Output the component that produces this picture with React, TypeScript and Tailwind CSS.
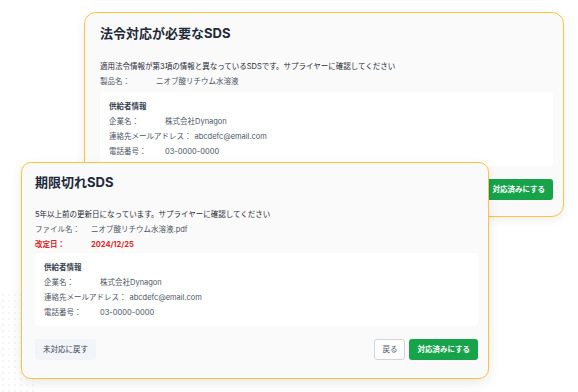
import React from 'react';

type Row = { label: string; value: string; wide?: boolean };

const supplierRows: Row[] = [
  { label: '企業名：', value: '株式会社Dynagon' },
  { label: '連絡先メールアドレス：', value: 'abcdefc@email.com', wide: true },
  { label: '電話番号：', value: '03-0000-0000' },
];

const InfoRow: React.FC<{ row: Row; className?: string }> = ({ row, className }) => (
  <div className={`flex h-[15px] items-center ${className ?? 'text-[#4b5563]'}`}>
    <span className={row.wide ? 'pr-[3px]' : 'w-[56px] shrink-0'}>{row.label}</span>
    <span>{row.value}</span>
  </div>
);

const SupplierBox: React.FC<{ className?: string }> = ({ className }) => (
  <div className={`rounded-[4px] bg-white pl-[9px] ${className ?? ''}`}>
    <div className="flex h-[15px] items-center font-semibold text-[#374151]">供給者情報</div>
    {supplierRows.map((r) => (
      <InfoRow key={r.label} row={r} />
    ))}
  </div>
);

const DoneButton: React.FC = () => (
  <button className="h-[21px] rounded-[3px] bg-[#16a34a] px-[8px] text-[7.5px] font-semibold text-white">
    対応済みにする
  </button>
);

export default function App() {
  return (
    <div className="relative h-[392px] w-[578px] overflow-hidden bg-white font-['Inter','Noto_Sans_CJK_JP',sans-serif] text-[7.5px] leading-[15px]">
      {/* faint dot pattern */}
      <div className="absolute bottom-0 left-0 h-[100px] w-[36px] bg-[radial-gradient(#f4f5f7_1px,transparent_1px)] bg-[length:6px_6px]" />

      {/* Back card */}
      <div className="absolute left-[84px] top-[12px] h-[205px] w-[480px] rounded-[12px] border border-[#fbc43c] bg-[#fafafa] pl-[15px] pr-[10px] pt-[12px] shadow-[0_3px_10px_rgba(0,0,0,0.07)]">
        <div className="h-[16px] text-[13px] font-bold leading-[16px] text-[#1e293b]">法令対応が必要なSDS</div>
        <div className="mt-[18px] text-[#1f2937]">
          適用法令情報が第3項の情報と異なっているSDSです。サプライヤーに確認してください
        </div>
        <InfoRow row={{ label: '製品名：', value: 'ニオブ酸リチウム水溶液' }} />
        <SupplierBox className="mt-[3px] pb-[7px] pt-[7px]" />
        <div className="mt-[13px] flex justify-end">
          <DoneButton />
        </div>
      </div>

      {/* Front card */}
      <div className="absolute left-[21px] top-[162px] h-[217px] w-[468px] rounded-[10px] border border-[#fbc43c] bg-[#fafafa] pl-[13px] pr-[10px] pt-[11px] shadow-[0_4px_12px_rgba(0,0,0,0.09)]">
        <div className="h-[16px] text-[13px] font-bold leading-[16px] text-[#1e293b]">期限切れSDS</div>
        <div className="mt-[17px] text-[#1f2937]">
          5年以上前の更新日になっています。サプライヤーに確認してください
        </div>
        <InfoRow row={{ label: 'ファイル名：', value: 'ニオブ酸リチウム水溶液.pdf' }} />
        <InfoRow row={{ label: '改定日：', value: '2024/12/25' }} className="font-bold text-[#dc2626]" />
        <SupplierBox className="mt-[1px] pb-[6px] pt-[7px]" />
        <div className="mt-[13px] flex items-center">
          <button className="h-[21px] rounded-[3px] bg-[#f1f4f8] px-[8px] text-[7.5px] text-[#374151]">
            未対応に戻す
          </button>
          <div className="flex-1" />
          <button className="mr-[4px] h-[21px] rounded-[3px] border border-[#d1d5db] bg-white px-[7px] text-[7.5px] text-[#4b5563]">
            戻る
          </button>
          <DoneButton />
        </div>
      </div>
    </div>
  );
}
